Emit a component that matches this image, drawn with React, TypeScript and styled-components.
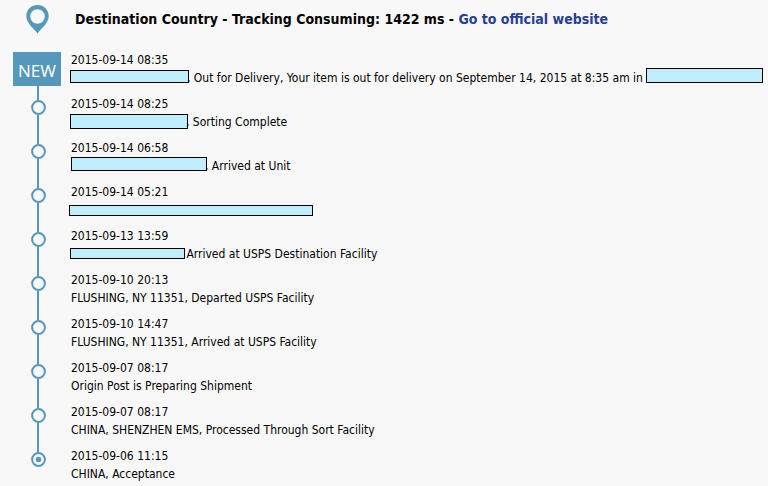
import React from "react";
import styled, { createGlobalStyle } from "styled-components";

const BLUE = "#5698bc";

const GlobalStyle = createGlobalStyle`
  body {
    margin: 0;
    background: #f8f8f8;
    color: #000;
    font-family: "DejaVu Sans Condensed", "DejaVu Sans", sans-serif;
    font-size: 12px;
    line-height: 18px;
  }
`;

const Page = styled.main`
  padding: 0 5px 0 13px;
`;

const Header = styled.header`
  display: grid;
  grid-template-columns: 50px 1fr;
  column-gap: 12px;
  align-items: center;
  height: 38px;
  margin-bottom: 13px;
`;

const Pin = styled.svg`
  display: block;
  width: 24px;
  height: 30px;
  margin-left: 12px;
`;

const Title = styled.h1`
  margin: 0;
  font-size: 14px;
  line-height: 20px;
  font-weight: 700;
  white-space: nowrap;
`;

const SiteLink = styled.a`
  color: #263f95;
  text-decoration: none;
`;

const Timeline = styled.ol`
  list-style: none;
  margin: 0;
  padding: 0;
`;

const Row = styled.li`
  display: grid;
  grid-template-columns: 50px 1fr;
  column-gap: 8px;
`;

const Rail = styled.div`
  display: flex;
  flex-direction: column;
  align-items: center;
`;

const Line = styled.div<{ $lead?: boolean }>`
  width: 2px;
  background: ${BLUE};
  flex: ${(p) => (p.$lead ? "0 0 5px" : "1")};
`;

const NewBadge = styled.div`
  align-self: flex-start;
  box-sizing: border-box;
  width: 48px;
  height: 34px;
  margin-top: 1px;
  padding-top: 2px;
  background: ${BLUE};
  color: #fff;
  font-family: "Open Sans", sans-serif;
  font-size: 17px;
  line-height: 34px;
  text-align: center;
`;

const Dot = styled.svg`
  display: block;
  flex: none;
  width: 16px;
  height: 15px;
`;

const Entry = styled.div<{ $last: boolean }>`
  min-width: 0;
  padding-bottom: ${(p) => (p.$last ? 0 : 8)}px;
  white-space: nowrap;
`;

const Stamp = styled.time`
  display: block;
`;

const Detail = styled.div`
  display: flex;
  align-items: flex-start;
  height: 18px;
`;

const Redaction = styled.span<{ $w: number; $h: number; $top: number; $left: number; $shrink: boolean }>`
  box-sizing: border-box;
  flex: 0 ${(p) => (p.$shrink ? 1 : 0)} ${(p) => p.$w}px;
  height: ${(p) => p.$h}px;
  margin-top: ${(p) => p.$top}px;
  margin-left: ${(p) => p.$left}px;
  border: 1px solid #000;
  background: #bfeeff;
`;

const Text = styled.span<{ $tucked: boolean }>`
  flex: none;
  margin-left: ${(p) => (p.$tucked ? -2 : 0)}px;
  white-space: pre;
`;

type Box = { w: number; h: number; top: number; left: number };
type Part = string | Box;

const events: { time: string; parts: Part[] }[] = [
  {
    time: "2015-09-14 08:35",
    parts: [
      { w: 119, h: 13, top: 1, left: -1 },
      ", Out for Delivery, Your item is out for delivery on September 14, 2015 at 8:35 am in",
      { w: 123, h: 15, top: -1, left: 3 },
    ],
  },
  { time: "2015-09-14 08:25", parts: [{ w: 118, h: 15, top: 1, left: -1 }, ", Sorting Complete"] },
  { time: "2015-09-14 06:58", parts: [{ w: 136, h: 14, top: 0, left: 0 }, ", Arrived at Unit"] },
  { time: "2015-09-14 05:21", parts: [{ w: 244, h: 11, top: 4, left: -2 }] },
  {
    time: "2015-09-13 13:59",
    parts: [{ w: 115, h: 11, top: 3, left: -1 }, " Arrived at USPS Destination Facility"],
  },
  { time: "2015-09-10 20:13", parts: ["FLUSHING, NY 11351, Departed USPS Facility"] },
  { time: "2015-09-10 14:47", parts: ["FLUSHING, NY 11351, Arrived at USPS Facility"] },
  { time: "2015-09-07 08:17", parts: ["Origin Post is Preparing Shipment"] },
  { time: "2015-09-07 08:17", parts: ["CHINA, SHENZHEN EMS, Processed Through Sort Facility"] },
  { time: "2015-09-06 11:15", parts: ["CHINA, Acceptance"] },
];

function Marker({ first, last }: { first: boolean; last: boolean }) {
  return (
    <Rail>
      {first ? (
        <NewBadge>NEW</NewBadge>
      ) : (
        <>
          <Line $lead />
          <Dot viewBox="0 0 16 15" aria-hidden="true">
            <circle cx="8.5" cy="7.5" r="6.4" fill="#f8f8f8" stroke={BLUE} strokeWidth="2" />
            {last && <circle cx="8.5" cy="7.5" r="2.8" fill={BLUE} />}
          </Dot>
        </>
      )}
      {!last && <Line />}
    </Rail>
  );
}

export default function App() {
  return (
    <>
      <GlobalStyle />
      <Page>
        <Header>
          <Pin viewBox="0 0 24 30" aria-hidden="true">
            <path
              fill={BLUE}
              fillRule="evenodd"
              d="M12.5 1C6.2 1 1.3 5.9 1.3 12c0 6.600 5.700 10.600 11.200 17.500C18 22.600 23.700 18.600 23.700 12 23.700 5.900 18.800 1 12.500 1zm0 4.200a7.300 7.300 0 1 1 0 14.600 7.300 7.300 0 0 1 0-14.600z"
            />
          </Pin>
          <Title>
            Destination Country - Tracking Consuming: 1422 ms - <SiteLink href="#">Go to official website</SiteLink>
          </Title>
        </Header>
        <Timeline>
          {events.map((event, i) => {
            const last = i === events.length - 1;
            return (
              <Row key={i}>
                <Marker first={i === 0} last={last} />
                <Entry $last={last}>
                  <Stamp>{event.time}</Stamp>
                  <Detail>
                    {event.parts.map((part, j) =>
                      typeof part === "string" ? (
                        <Text key={j} $tucked={j > 0}>
                          {part}
                        </Text>
                      ) : (
                        <Redaction
                          key={j}
                          $w={part.w}
                          $h={part.h}
                          $top={part.top}
                          $left={part.left}
                          $shrink={j > 0}
                        />
                      )
                    )}
                  </Detail>
                </Entry>
              </Row>
            );
          })}
        </Timeline>
      </Page>
    </>
  );
}
